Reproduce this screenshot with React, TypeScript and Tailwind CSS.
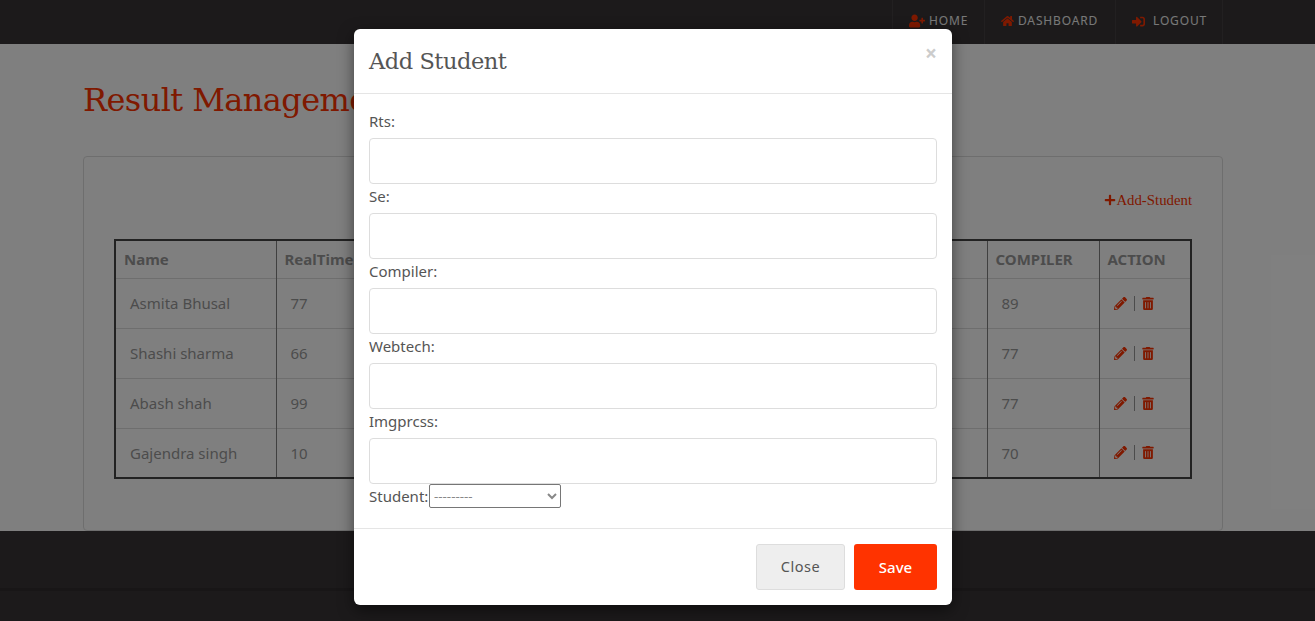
import { FaHome, FaPencilAlt, FaPlus, FaSignInAlt, FaTrashAlt, FaUserPlus } from "react-icons/fa";

const students = [
  { name: "Asmita Bhusal", rts: 77, se: 80, web: 72, img: 65, compiler: 89 },
  { name: "Shashi sharma", rts: 66, se: 71, web: 68, img: 74, compiler: 77 },
  { name: "Abash shah", rts: 99, se: 85, web: 90, img: 81, compiler: 77 },
  { name: "Gajendra singh", rts: 10, se: 60, web: 55, img: 62, compiler: 70 },
];

const fields = ["Rts:", "Se:", "Compiler:", "Webtech:", "Imgprcss:"];

const headCell = "border-r border-[#808080] pl-2 text-left text-[15px] font-bold";
const bodyCell = "border-r border-[#808080] border-t border-t-[#dcdcdc] pl-[14px] text-[15px] font-normal";

export default function App() {
  return (
    <div className="relative h-[621px] overflow-hidden bg-white font-['Noto_Sans',sans-serif] text-[#999999]">
      {/* Nav */}
      <header className="flex h-11 justify-end bg-[#383537] pr-[92px] text-xs tracking-[0.85px] text-[#f0f0f0]">
        <a className="flex w-[93px] items-center border-x border-[#444143] pb-[2px] pl-4">
          <FaUserPlus className="mr-[4px] h-[14px] w-[16px] text-[#ff3300]" />
          HOME
        </a>
        <a className="flex w-[131px] items-center border-r border-[#444143] pb-[2px] pl-4">
          <FaHome className="mr-[4px] h-[14px] w-[13px] text-[#ff3300]" />
          DASHBOARD
        </a>
        <a className="flex w-[107px] items-center border-r border-[#444143] pb-[2px] pl-4">
          <FaSignInAlt className="mr-[8px] h-[13px] w-[13px] text-[#ff3300]" />
          LOGOUT
        </a>
      </header>

      {/* Page */}
      <main className="ml-[83px] h-[487px] w-[1140px]">
        <h1 className="pt-[33px] font-['DejaVu_Serif',serif] text-[32px] leading-[46px] font-normal tracking-[-0.6px] text-[#ff3300]">
          Result Management
        </h1>
        <section className="mt-[33px] h-[375px] rounded border border-[#dddddd] px-[30px] pt-[34px]">
          <div className="flex h-[48px] items-start justify-end font-['Liberation_Serif',serif] text-[14.8px] leading-[18px] text-[#ff3300]">
            <FaPlus className="mt-[3px] h-3 w-3" />
            <span>Add-Student</span>
          </div>
          <table className="w-[1078px] table-fixed border-collapse border-2 border-[#444444]">
            <colgroup>
              <col className="w-[161px]" />
              <col className="w-[178px]" />
              <col className="w-[178px]" />
              <col className="w-[178px]" />
              <col className="w-[177px]" />
              <col className="w-[112px]" />
              <col />
            </colgroup>
            <thead>
              <tr className="h-[38px]">
                <th className={headCell}>Name</th>
                <th className={headCell}>RealTime</th>
                <th className={headCell}>SE</th>
                <th className={headCell}>WEBTECH</th>
                <th className={headCell}>IMGPRCSS</th>
                <th className={headCell}>COMPILER</th>
                <th className="pl-2 text-left text-[15px] font-bold">ACTION</th>
              </tr>
            </thead>
            <tbody>
              {students.map((s) => (
                <tr key={s.name} className="h-[50px]">
                  <td className={bodyCell}>{s.name}</td>
                  <td className={bodyCell}>{s.rts}</td>
                  <td className={bodyCell}>{s.se}</td>
                  <td className={bodyCell}>{s.web}</td>
                  <td className={bodyCell}>{s.img}</td>
                  <td className={bodyCell}>{s.compiler}</td>
                  <td className="border-t border-t-[#dcdcdc] pl-[14px]">
                    <div className="flex items-center text-[#ff3300]">
                      <FaPencilAlt className="h-[13px] w-[13px]" />
                      <span className="mx-[7px] h-[15px] w-px bg-[#999999]" />
                      <FaTrashAlt className="h-[13px] w-[12px]" />
                    </div>
                  </td>
                </tr>
              ))}
            </tbody>
          </table>
        </section>
      </main>

      {/* Footer */}
      <footer className="h-[90px] bg-[#383537]">
        <div className="h-[57px]" />
        <div className="h-[33px] border-t-[3px] border-[#302d2f]" />
      </footer>

      {/* Modal */}
      <div className="absolute inset-0 bg-black/50">
        <div className="mt-[29px] ml-[354px] w-[598px] rounded-md bg-white text-[#555555] shadow-[0_5px_15px_rgba(0,0,0,0.5)]">
          <div className="flex h-[65px] items-start justify-between border-b border-[#e5e5e5] px-[15px]">
            <h4 className="pt-[16px] font-['DejaVu_Serif',serif] text-[22.5px] leading-[32px] font-normal tracking-[-0.45px] text-[#555555]">
              Add Student
            </h4>
            <button className="mt-[12px] text-[21px] leading-[24px] font-bold text-[#cccccc]">×</button>
          </div>
          <form className="h-[434px] px-[15px] pt-[15px] text-[15px] leading-[25px]">
            {fields.map((label) => (
              <div key={label} className="h-[75px]">
                <label className="block h-[29px] leading-[25px]">{label}</label>
                <input className="block h-[46px] w-full rounded border border-[#dddddd] bg-white" />
              </div>
            ))}
            <div className="flex h-6 items-center">
              <span className="w-[60px]">Student:</span>
              <select className="h-6 w-[132px] rounded-[2px] border border-[#767676] bg-white text-[13.3px] text-[#888888]">
                <option>---------</option>
              </select>
            </div>
          </form>
          <div className="flex h-[77px] justify-end gap-[9px] border-t border-[#e5e5e5] px-[15px] pt-[15px] text-[14.5px]">
            <button className="h-[46px] w-[89px] rounded-[3px] border border-[#dddddd] bg-[#eeeeee] tracking-[0.5px] text-[#555555]">
              Close
            </button>
            <button className="h-[46px] w-[83px] rounded-[3px] bg-[#ff3300] text-[15px] font-medium text-white">Save</button>
          </div>
        </div>
      </div>
    </div>
  );
}
